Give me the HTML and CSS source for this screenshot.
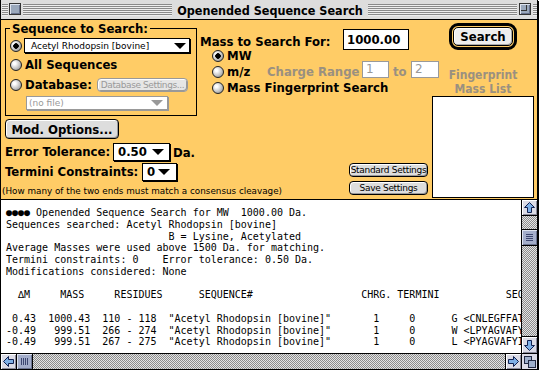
FILE: index.html
```html
<!DOCTYPE html>
<html lang="en">
<head>
<meta charset="UTF-8">
<title>Openended Sequence Search</title>
<link rel="stylesheet" href="styles.css">
</head>
<body>
<div class="window">

  <!-- title bar -->
  <div class="titlebar">
    <span class="stripes edge-l"></span>
    <span class="tbox close"></span>
    <span class="stripes"></span>
    <span class="title">Openended Sequence Search</span>
    <span class="stripes"></span>
    <span class="tbox zoom"><span></span></span>
    <span class="stripes edge-r"></span>
  </div>

  <!-- search settings -->
  <div class="panel">
    <div class="main">
      <div class="top">
        <div class="group">
          <div class="group-title">Sequence to Search:</div>
          <div class="grow g1">
            <span class="radio on"></span>
            <div class="popup seq"><span>Acetyl Rhodopsin [bovine]</span><i class="tri"></i></div>
          </div>
          <div class="grow g2">
            <span class="radio"></span><span class="lbl">All Sequences</span>
          </div>
          <div class="grow g3">
            <span class="radio"></span><span class="lbl">Database:</span>
            <span class="btn small off db">Database Settings...</span>
          </div>
          <div class="grow g4">
            <div class="popup file off"><span>(no file)</span><i class="tri"></i></div>
          </div>
        </div>

        <div class="mass">
          <div class="mass-row">
            <span class="mass-label">Mass to Search For:</span>
            <span class="field">1000.00</span>
          </div>
          <div class="mrow first"><span class="radio on"></span><span class="lbl">MW</span></div>
          <div class="mrow">
            <span class="radio"></span><span class="lbl mz">m/z</span>
            <span class="dim range">Charge Range</span>
            <span class="field small off">1</span>
            <span class="dim to">to</span>
            <span class="field small off two">2</span>
          </div>
          <div class="mrow"><span class="radio"></span><span class="lbl">Mass Fingerprint Search</span></div>
        </div>
      </div>

      <div class="lower">
        <div class="opts">
          <span class="btn mod">Mod. Options...</span>
          <div class="orow first">
            <span class="olabel err">Error Tolerance:</span>
            <div class="popup bold w-err"><span>0.50</span><i class="tri"></i></div>
            <span class="unit">Da.</span>
          </div>
          <div class="orow">
            <span class="olabel term">Termini Constraints:</span>
            <div class="popup bold w-term"><span>0</span><i class="tri"></i></div>
          </div>
          <p class="note">(How many of the two ends must match a consensus cleavage)</p>
        </div>
        <div class="settings">
          <span class="btn small">Standard Settings</span>
          <span class="btn small">Save Settings</span>
        </div>
      </div>
    </div>

    <div class="side">
      <div class="default-ring"><span class="btn search">Search</span></div>
      <div class="fp-label">
        <div>Fingerprint</div>
        <div>Mass List</div>
      </div>
      <div class="fp-list"></div>
    </div>
  </div>

  <!-- results -->
  <div class="results">
<pre class="output">●●●● Openended Sequence Search for MW  1000.00 Da.
Sequences searched: Acetyl Rhodopsin [bovine]
                           B = Lysine, Acetylated
Average Masses were used above 1500 Da. for matching.
Termini constraints: 0    Error tolerance: 0.50 Da.
Modifications considered: None

  ∆M     MASS     RESIDUES      SEQUENCE#                  CHRG. TERMINI           SEQUENCE

 0.43  1000.43  110 - 118  "Acetyl Rhodopsin [bovine]"       1     0      G &lt;CNLEGFFATLGGEIALWSLV
-0.49   999.51  266 - 274  "Acetyl Rhodopsin [bovine]"       1     0      W &lt;LPYAGVAFYIFTHQGSDF
-0.49   999.51  267 - 275  "Acetyl Rhodopsin [bovine]"       1     0      L &lt;PYAGVAFYIFTHQGSDFG</pre>
    <div class="vscroll">
      <span class="arrow up"><svg width="11" height="11" viewBox="0 0 11 11"><path d="M5.5 0.5 L10.5 5.5 L7.5 5.5 L7.5 10.5 L3.5 10.5 L3.5 5.5 L0.5 5.5 Z"/></svg></span>
      <div class="track">
        <span class="thumb"><svg width="9" height="9" viewBox="0 0 9 9"><path d="M1 1.5 H8 M1 3.5 H8 M1 5.5 H8 M1 7.5 H8"/></svg></span>
      </div>
      <span class="arrow down"><svg class="rot180" width="11" height="11" viewBox="0 0 11 11"><path d="M5.5 0.5 L10.5 5.5 L7.5 5.5 L7.5 10.5 L3.5 10.5 L3.5 5.5 L0.5 5.5 Z"/></svg></span>
    </div>
  </div>

  <div class="hscroll">
    <span class="arrow left"><svg class="rot270" width="11" height="11" viewBox="0 0 11 11"><path d="M5.5 0.5 L10.5 5.5 L7.5 5.5 L7.5 10.5 L3.5 10.5 L3.5 5.5 L0.5 5.5 Z"/></svg></span>
    <span class="hthumb"><svg width="9" height="9" viewBox="0 0 9 9"><path d="M1.5 1 V8 M3.5 1 V8 M5.5 1 V8 M7.5 1 V8"/></svg></span>
    <div class="htrack"></div>
    <span class="arrow right"><svg class="rot90" width="11" height="11" viewBox="0 0 11 11"><path d="M5.5 0.5 L10.5 5.5 L7.5 5.5 L7.5 10.5 L3.5 10.5 L3.5 5.5 L0.5 5.5 Z"/></svg></span>
    <span class="growbox"><svg width="12" height="12" viewBox="0 0 12 12"><rect x="0.5" y="0.5" width="7" height="7"/><rect x="4.5" y="4.5" width="7" height="7"/></svg></span>
  </div>
</div>
</body>
</html>
```

FILE: styles.css
```css
* {
    box-sizing: border-box;
}

body {
    margin: 0;
    background: #fff;
}

.window {
    width: 538px;
    height: 370px;
    border: 1px solid #000;
    border-top: 0;
    box-shadow: 1px 1px 0 #000;
    display: flex;
    flex-direction: column;
    overflow: hidden;
    font-family: "DejaVu Sans Condensed", "DejaVu Sans", sans-serif;
    font-stretch: condensed;
    font-weight: bold;
    font-size: 13px;
    color: #000;
}

/* small Geneva-like text */
.popup.seq,
.popup.file,
.btn.small,
.field.small,
.note {
    font-family: "DejaVu Sans", sans-serif;
    font-stretch: normal;
    font-weight: normal;
}

/* ---- title bar ---- */
.titlebar {
    flex: none;
    height: 20px;
    display: flex;
    align-items: flex-start;
    padding: 3px 0 0 1px;
    background: #ddd;
    border-bottom: 1px solid #000;
}

.stripes {
    flex: 1;
    height: 12px;
    margin-top: 1px;
    background: repeating-linear-gradient(#8a8a8a 0 1px, #eee 1px 2px);
}

.stripes.edge-l {
    flex: none;
    width: 6px;
    margin-right: 1px;
}

.stripes.edge-r {
    flex: none;
    width: 4px;
    margin-left: 2px;
}

.tbox {
    flex: none;
    width: 12px;
    height: 12px;
    border: 1px solid #333;
    background: #9aa8bc;
    box-shadow: inset 1px 1px 0 #dde3ee, inset -1px -1px 0 #66708a;
}

.tbox.close {
    margin-right: 2px;
}

.tbox.zoom {
    margin-left: 2px;
    padding: 1px;
}

.tbox.zoom span {
    display: block;
    width: 6px;
    height: 6px;
    border-right: 1px solid #333;
    border-bottom: 1px solid #333;
}

.title {
    flex: none;
    padding: 0 5px;
    font-size: 12.5px;
    line-height: 16px;
}

/* ---- settings panel ---- */
.panel {
    flex: none;
    height: 180px;
    display: flex;
    background: #fc6;
    border-bottom: 1px solid #000;
}

.main {
    width: 431px;
    flex: none;
    display: flex;
    flex-direction: column;
}

.top {
    display: flex;
    align-items: flex-start;
}

.group {
    flex: none;
    width: 192px;
    height: 88px;
    margin: 8px 0 0 4px;
    padding-left: 4px;
    border: 1px solid #000;
}

.group-title {
    width: fit-content;
    margin-top: -7px;
    padding: 0 2px;
    line-height: 14px;
    background: #fc6;
    white-space: nowrap;
}

.grow {
    display: flex;
    align-items: center;
}

.g1 { margin-top: 2px; height: 15px; }
.g2 { margin-top: 4px; height: 16px; }
.g3 { margin-top: 4px; height: 16px; }
.g4 { margin-top: 2px; height: 15px; }

.radio {
    flex: none;
    width: 12px;
    height: 12px;
    border-radius: 50%;
    border: 1px solid #222;
    background: radial-gradient(circle at 35% 35%, #fff 0 12%, #c4c4c4 55%, #7a7a7a 100%);
}

.radio.on {
    background:
        radial-gradient(circle, #000 0 2.5px, transparent 3px),
        radial-gradient(circle at 35% 35%, #fff 0 12%, #c4c4c4 55%, #7a7a7a 100%);
}

.lbl {
    margin-left: 3px;
    line-height: 14px;
    white-space: nowrap;
}

.popup {
    display: flex;
    align-items: center;
    justify-content: space-between;
    background: #fff;
    border: 1px solid #000;
    box-shadow: 1px 1px 0 #000;
    white-space: nowrap;
}

.tri {
    flex: none;
    width: 0;
    height: 0;
    border-left: 6px solid transparent;
    border-right: 6px solid transparent;
    border-top: 6px solid #000;
}

.popup.seq {
    margin-left: 2px;
    width: 166px;
    height: 15px;
    padding: 0 3px 0 6px;
    font-size: 9px;
}

.popup.file {
    margin-left: 16px;
    width: 142px;
    height: 14px;
    padding: 0 4px 0 2px;
    font-size: 9px;
    color: #999;
    border-color: #999;
    box-shadow: 1px 1px 0 #999;
}

.popup.file .tri {
    border-top-color: #999;
}

.btn {
    display: flex;
    align-items: center;
    justify-content: center;
    border: 1px solid #000;
    border-radius: 4px;
    background: #ddd;
    box-shadow: inset 1px 1px 0 #fff, inset -1px -1px 0 #999;
    white-space: nowrap;
}

.btn.small {
    height: 14px;
    font-size: 9px;
    letter-spacing: -0.3px;
}

.btn.off {
    color: #999;
    border-color: #999;
    background: #e6e6e6;
}

.btn.db {
    width: 91px;
    margin: 0 8px 0 auto;
    letter-spacing: -0.4px;
}

/* mass column */
.mass {
    flex: none;
    margin: 9px 0 0 3px;
}

.mass-row {
    display: flex;
    align-items: center;
    height: 21px;
}

.mass-label {
    width: 143px;
    margin-top: 4px;
    line-height: 14px;
    white-space: nowrap;
}

.field {
    width: 66px;
    height: 21px;
    padding-left: 3px;
    line-height: 19px;
    background: #fff;
    border: 1px solid #000;
}

.mrow {
    display: flex;
    align-items: center;
    height: 16px;
    margin-left: 12px;
}

.mrow.first {
    margin-top: -2px;
}

.lbl.mz {
    width: 40px;
}

.dim {
    color: #9a9080;
    line-height: 14px;
    white-space: nowrap;
}

.dim.range {
    width: 95px;
}

.dim.to {
    width: 18px;
    margin-left: 4px;
}

.field.small {
    width: 27px;
    height: 17px;
    margin-bottom: 6px;
    padding-left: 3px;
    font-size: 12px;
    line-height: 15px;
}

.field.off {
    color: #999;
    border-color: #999;
}

.field.two {
    width: 28px;
}

/* lower options */
.lower {
    flex: 1;
    display: flex;
}

.opts {
    flex: 1;
    padding-left: 4px;
}

.btn.mod {
    width: 114px;
    height: 20px;
    margin-top: 3px;
}

.orow {
    display: flex;
    align-items: center;
    height: 20px;
}

.orow.first {
    margin-top: 3px;
}

.olabel {
    flex: none;
    line-height: 14px;
    white-space: nowrap;
}

.olabel.err { width: 108px; }
.olabel.term { width: 137px; }

.popup.bold {
    height: 18px;
    line-height: 16px;
}

.popup.w-err {
    width: 57px;
    padding: 0 5px 0 4px;
}

.popup.w-term {
    width: 35px;
    padding: 0 6px 0 4px;
}

.unit {
    margin-left: 3px;
}

.note {
    margin: 4px 0 0 -3px;
    font-size: 8.8px;
    line-height: 11px;
    white-space: nowrap;
}

.settings {
    width: 79px;
    margin-right: 4px;
    padding-top: 47px;
    display: flex;
    flex-direction: column;
    gap: 4px;
}

/* right column */
.side {
    width: 102px;
    flex: none;
}

.default-ring {
    width: 68px;
    height: 27px;
    margin: 3px auto 0;
    padding: 1px;
    border: 3px solid #000;
    border-radius: 9px;
}

.btn.search {
    height: 19px;
    border-radius: 5px;
    background: #eee;
    box-shadow: inset 1px 1px 0 #fff, inset -1px -1px 0 #aaa;
}

.fp-label {
    margin-top: 18px;
    text-align: center;
    font-size: 12px;
    line-height: 14px;
    color: #9a9080;
}

.fp-list {
    height: 102px;
    background: #fff;
    border: 1px solid #000;
}

/* ---- results text ---- */
.results {
    flex: none;
    height: 153px;
    display: flex;
}

.output {
    flex: 1;
    margin: 0;
    padding: 7px 0 0 5px;
    background: #fff;
    font: 10px/11.75px "DejaVu Sans Mono", monospace;
    font-stretch: normal;
    font-weight: normal;
    white-space: pre;
    overflow: hidden;
}

.vscroll {
    width: 16px;
    flex: none;
    display: flex;
    flex-direction: column;
    border-left: 1px solid #000;
}

.arrow {
    flex: none;
    display: flex;
    align-items: center;
    justify-content: center;
    background: #dcdce6;
    box-shadow: inset 1px 1px 0 #fff, inset -1px -1px 0 #8a8a9a;
}

.arrow svg path {
    fill: #7fb0e6;
    stroke: #102050;
    stroke-width: 1;
}

.rot90 { transform: rotate(90deg); }
.rot180 { transform: rotate(180deg); }
.rot270 { transform: rotate(270deg); }

.arrow.up {
    height: 16px;
    border-bottom: 1px solid #000;
}

.arrow.down {
    height: 17px;
    border-top: 1px solid #000;
}

.track,
.htrack {
    flex: 1;
    background: repeating-conic-gradient(#8c8c8c 0 25%, #e4e4e4 0 50%) 0 0 / 2px 2px;
}

.track {
    display: flex;
    flex-direction: column;
}

.thumb,
.hthumb {
    display: flex;
    align-items: center;
    justify-content: center;
    background: #a4aecb;
    box-shadow: inset 1px 1px 0 #dfe4f0, inset -1px -1px 0 #6c7490;
}

.thumb svg path,
.hthumb svg path {
    stroke: #3c4670;
    stroke-width: 1;
}

.thumb {
    height: 17px;
    margin-top: 13px;
    border-top: 1px solid #000;
    border-bottom: 1px solid #000;
}

.hscroll {
    flex: none;
    height: 16px;
    display: flex;
    border-top: 1px solid #000;
}

.arrow.left {
    width: 16px;
    border-right: 1px solid #000;
}

.hthumb {
    width: 16px;
    border-right: 1px solid #000;
}

.arrow.right {
    width: 16px;
    border-left: 1px solid #000;
}

.growbox {
    width: 16px;
    display: flex;
    align-items: center;
    justify-content: center;
    border-left: 1px solid #000;
    background: #dcdce6;
}

.growbox rect {
    fill: #9fb0cc;
    stroke: #202840;
}
```
